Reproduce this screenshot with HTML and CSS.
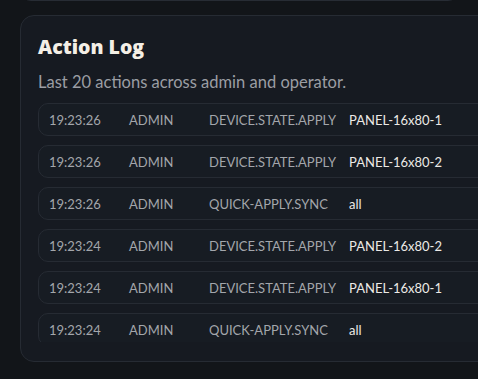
FILE: index.html
```html
<!DOCTYPE html>
<html lang="en">
<head>
    <meta charset="UTF-8">
    <meta name="viewport" content="width=device-width, initial-scale=1.0">
    <title>Action Log</title>
    <link rel="stylesheet" href="styles.css">
</head>
<body>
    <div class="prev-card"></div>

    <div class="card">
        <h2 class="title">Action Log</h2>
        <p class="subtitle">Last 20 actions across admin and operator.</p>

        <div class="log">
            <div class="row">
                <span class="time">19:23:26</span>
                <span class="actor">ADMIN</span>
                <span class="action">DEVICE.STATE.APPLY</span>
                <span class="target">PANEL-16x80-1</span>
            </div>
            <div class="row">
                <span class="time">19:23:26</span>
                <span class="actor">ADMIN</span>
                <span class="action">DEVICE.STATE.APPLY</span>
                <span class="target">PANEL-16x80-2</span>
            </div>
            <div class="row">
                <span class="time">19:23:26</span>
                <span class="actor">ADMIN</span>
                <span class="action">QUICK-APPLY.SYNC</span>
                <span class="target">all</span>
            </div>
            <div class="row">
                <span class="time">19:23:24</span>
                <span class="actor">ADMIN</span>
                <span class="action">DEVICE.STATE.APPLY</span>
                <span class="target">PANEL-16x80-2</span>
            </div>
            <div class="row">
                <span class="time">19:23:24</span>
                <span class="actor">ADMIN</span>
                <span class="action">DEVICE.STATE.APPLY</span>
                <span class="target">PANEL-16x80-1</span>
            </div>
            <div class="row">
                <span class="time">19:23:24</span>
                <span class="actor">ADMIN</span>
                <span class="action">QUICK-APPLY.SYNC</span>
                <span class="target">all</span>
            </div>
        </div>
    </div>
</body>
</html>
```

FILE: styles.css
```css
body{
    margin: 0;
    background: #121519;
    font-family: Lato, "Noto Sans", sans-serif;
    overflow: hidden;
    height: 379px;
}
.prev-card{
    height: 20px;
    width: 437px;
    margin: -21px 0 0 20px;
    border: 1px solid #272c34;
    border-radius: 14px;
    background: #161a21;
}
.card{
    margin: 14px 0 0 20px;
    width: 560px;
    box-sizing: border-box;
    padding: 18px 18px 19px 17px;
    background: #161a21;
    border: 1px solid #262b33;
    border-radius: 14px;
}
.title{
    margin: 0;
    font-family: "Open Sans", Lato, sans-serif;
    font-weight: 800;
    font-size: 19.5px;
    line-height: 26px;
    color: #f4efe6;
}
.subtitle{
    margin: 12px 0 0 0;
    font-size: 16.5px;
    line-height: 20px;
    color: #9b9ea4;
}
.log{
    margin-top: 11px;
    height: 239px;
    overflow: hidden;
    display: flex;
    flex-direction: column;
    gap: 9px;
}
.row{
    flex-shrink: 0;
    display: grid;
    grid-template-columns: 80px 80px 140px auto;
    align-items: center;
    height: 31px;
    padding-left: 10px;
    background: #171c23;
    border: 1px solid #262b33;
    border-radius: 10px;
    font-size: 13px;
    color: #a3a6ab;
}
.target{
    color: #eceae6;
}
```
